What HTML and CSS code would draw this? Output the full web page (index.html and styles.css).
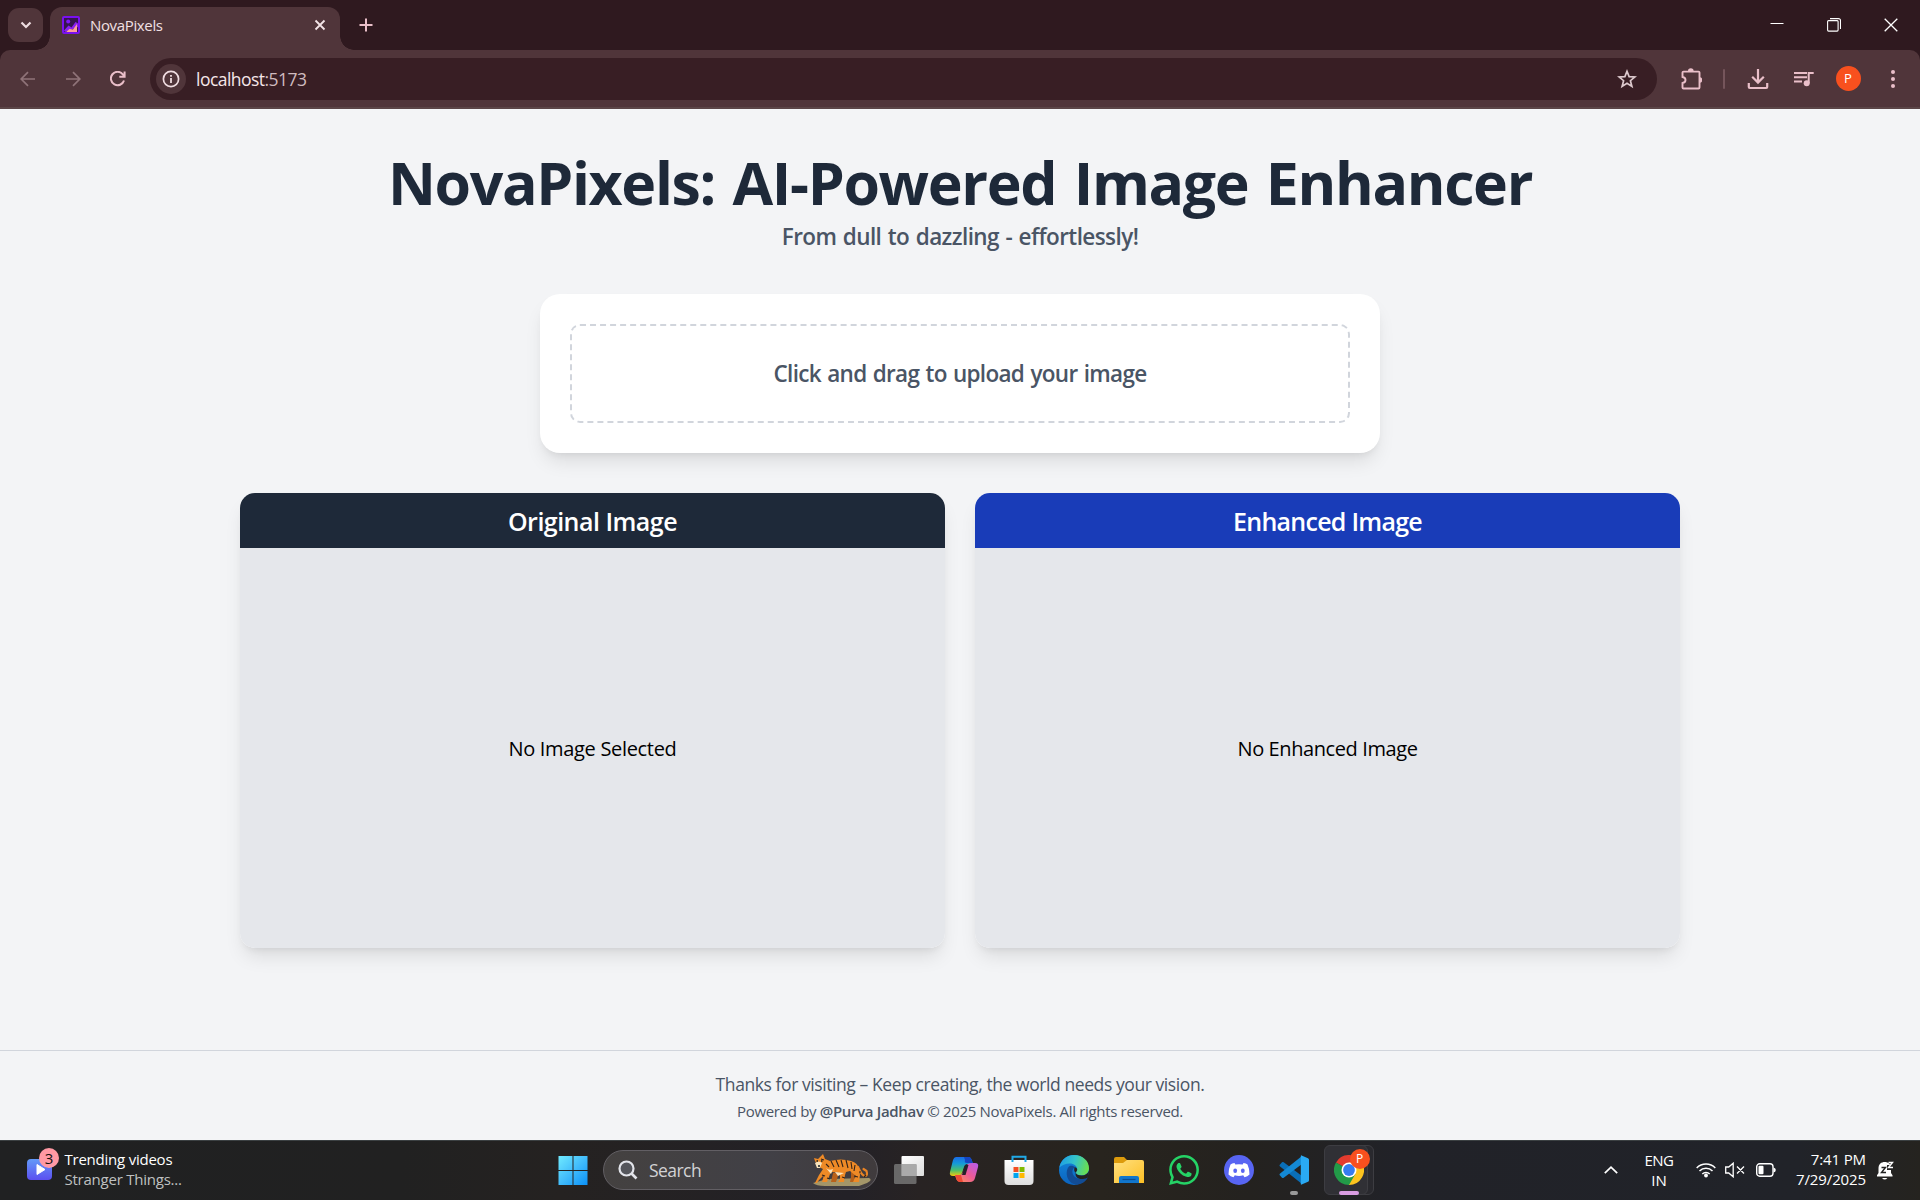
FILE: index.html
```html
<!DOCTYPE html>
<html lang="en">
<head>
<meta charset="utf-8">
<title>NovaPixels</title>
<link rel="stylesheet" href="styles.css">
</head>
<body>
<div class="screen">
  <header class="browser">
    <div class="tab-strip">
      <button class="tab-search" aria-label="Search tabs"><svg width="12" height="8" viewBox="0 0 12 8"><path d="M1.5 1.5 6 6l4.500-4.500" fill="none" stroke="#eedde0" stroke-width="2.200"/></svg></button>
      <div class="tab">
        <svg class="favicon" width="18" height="18" viewBox="0 0 18 18"><rect x="1" y="1" width="16" height="16" rx="1" fill="#35154f" stroke="#7a10f0" stroke-width="2"/><circle cx="6.200" cy="5.600" r="2" fill="#7f18f5"/><path d="M2 14.500 6.500 9.500l3 2L13.500 6 16 7.500V11L3 16z" fill="#8a20f0"/><path d="M4 16l3.500-3 3.500.5L15 8v8z" fill="#ff9c9c"/></svg>
        <span class="tab-title t-tab">NovaPixels</span>
        <svg class="tab-close" width="12" height="12" viewBox="0 0 12 12"><path d="M1.500 1.500l9 9m0-9l-9 9" stroke="#f3e4e7" stroke-width="1.800"/></svg>
      </div>
      <svg class="new-tab" width="14" height="14" viewBox="0 0 14 14"><path d="M7 .5v13M.5 7h13" stroke="#eabfc9" stroke-width="2"/></svg>
      <div class="window-controls">
        <svg width="14" height="14" viewBox="0 0 14 14"><path d="M.5 5.500h13" stroke="#fff" stroke-width="1"/></svg>
        <svg width="14" height="14" viewBox="0 0 14 14"><rect x=".6" y="2.600" width="10.500" height="10.500" rx="1" fill="none" stroke="#fff" stroke-width="1.100"/><path d="M3 .6h8.500a2 2 0 0 1 2 2V11" fill="none" stroke="#fff" stroke-width="1.100"/></svg>
        <svg width="14" height="14" viewBox="0 0 14 14"><path d="M.7.700l12.600 12.600m0-12.600L.7 13.300" stroke="#fff" stroke-width="1.300"/></svg>
      </div>
    </div>
    <div class="toolbar">
      <div class="nav-icons">
        <svg width="16" height="16" viewBox="0 0 16 16"><path d="M15 8H1.500M8 1.200 1.200 8 8 14.800" fill="none" stroke="#8f7378" stroke-width="1.700"/></svg>
        <svg width="16" height="16" viewBox="0 0 16 16"><path d="M1 8h13.500M8 1.200 14.800 8 8 14.800" fill="none" stroke="#8f7378" stroke-width="1.700"/></svg>
        <svg width="16" height="16" viewBox="0 0 16 16"><path d="M14 9.500A6.700 6.700 0 1 1 12.800 3.300L14.500 5.400M14.600.6v5.200H9.300" fill="none" stroke="#eabfc9" stroke-width="2"/></svg>
      </div>
      <div class="omnibox">
        <span class="site-info"><svg width="18" height="18" viewBox="0 0 18 18"><circle cx="9" cy="9" r="7.600" fill="none" stroke="#f0dde1" stroke-width="1.700"/><path d="M9 8v5M9 5v1.800" stroke="#f0dde1" stroke-width="1.800"/></svg></span>
        <span class="url t-url">localhost<span class="port">:5173</span></span>
        <svg class="star" width="20" height="20" viewBox="0 0 20 20"><path d="m10 2.300 2.100 5.300 5.800.4-4.500 3.700 1.500 5.700-4.900-3.100-4.900 3.100 1.500-5.700L2.100 8l5.800-.4z" fill="none" stroke="#dcc9cd" stroke-width="1.700"/></svg>
      </div>
      <div class="actions">
        <svg class="ext" width="22" height="22" viewBox="0 0 22 22"><path d="M2.500 4.500q0-.900 1-.900h15q1 0 1 1v14.900q0 1-1 1h-15q-1 0-1-1V15q3-.5 3-3t-3-3z" fill="none" stroke="#eabfc9" stroke-width="1.900"/><path d="M8 3a2.800 2.800 0 0 1 5.600 0zM19.500 9.200a2.800 2.800 0 0 1 0 5.600z" fill="#eabfc9"/></svg>
        <span class="divider"></span>
        <svg class="dl" width="22" height="22" viewBox="0 0 22 22"><path d="M11 1v13M5.200 8.800 11 14.600l5.800-5.800M1.800 15v4q0 1 1 1h16.400q1 0 1-1v-4" fill="none" stroke="#eabfc9" stroke-width="2.200"/></svg>
        <svg class="music" width="20" height="18" viewBox="0 0 20 18"><path d="M0 3h13M0 7.200h13M0 11.400h8M14.700 13V3h5" fill="none" stroke="#eabfc9" stroke-width="2"/><circle cx="12.700" cy="13.200" r="3" fill="#eabfc9"/></svg>
        <span class="avatar">P</span>
        <svg class="dots" width="4" height="20" viewBox="0 0 4 20"><circle cx="2" cy="3" r="2" fill="#eabfc9"/><circle cx="2" cy="10" r="2" fill="#eabfc9"/><circle cx="2" cy="17" r="2" fill="#eabfc9"/></svg>
      </div>
    </div>
  </header>

  <div class="page">
    <div class="hero">
      <h1 class="t-title">NovaPixels: AI-Powered Image Enhancer</h1>
      <p class="t-sub">From dull to dazzling - effortlessly!</p>
    </div>
    <div class="upload"><label class="dropzone"><span class="t-drop">Click and drag to upload your image</span></label></div>
    <div class="panels">
      <section class="panel"><h2 class="panel-dark"><span class="t-orig">Original Image</span></h2><div class="panel-body"><span class="t-nosel">No Image Selected</span></div></section>
      <section class="panel"><h2 class="panel-blue"><span class="t-enh">Enhanced Image</span></h2><div class="panel-body"><span class="t-noenh">No Enhanced Image</span></div></section>
    </div>
    <footer class="footer">
      <p class="thanks"><span class="t-thanks">Thanks for visiting – Keep creating, the world needs your vision.</span></p>
      <p class="powered"><span class="t-pow">Powered by <strong>@Purva Jadhav</strong> © 2025 NovaPixels. All rights reserved.</span></p>
    </footer>
  </div>

  <div class="taskbar">
    <div class="widgets">
      <div class="widget-icon"><svg width="25" height="21" viewBox="0 0 25 21"><defs><linearGradient id="wg" x2="0" y2="1"><stop stop-color="#639af8"/><stop offset="1" stop-color="#5b4ff0"/></linearGradient></defs><rect width="25" height="21" rx="4" fill="url(#wg)"/><path d="M10 5.500v10l8-5z" fill="#fff" stroke="#fff" stroke-linejoin="round"/></svg><span class="badge">3</span></div>
      <div class="widget-text"><span class="t-trend">Trending videos</span><span class="muted t-str">Stranger Things...</span></div>
    </div>
    <div class="apps">
      <div class="app"><svg width="30" height="30" viewBox="0 0 30 30"><defs><linearGradient id="win" gradientUnits="userSpaceOnUse" x1="0" y1="0" x2="30" y2="30"><stop stop-color="#72edff"/><stop offset=".5" stop-color="#43bdfb"/><stop offset="1" stop-color="#0a90f8"/></linearGradient></defs><path d="M.5 1h14v14H.5zM15.500 1h14v14h-14zM.5 16h14v14H.5zM15.500 16h14v14h-14z" fill="url(#win)"/></svg></div>
      <div class="search">
        <svg width="20" height="20" viewBox="0 0 20 20"><circle cx="8.500" cy="8.500" r="7" fill="#55565c" stroke="#e3e4ea" stroke-width="2.200"/><path d="m13.500 13.500 5 5" stroke="#e3e4ea" stroke-width="2.600"/></svg>
        <span class="t-search">Search</span>
        <svg class="tiger" width="58" height="34" viewBox="0 0 58 34">
          <path d="M0 30 14 26l42-1q4 2-2 5l-8 3H12Q3 33 0 30z" fill="#a49669"/>
          <path d="M45 14q4 9 7 9t1.500-5l-3-2" fill="none" stroke="#e88324" stroke-width="2.200" stroke-linecap="round"/>
          <path d="M20 20h6l-3 9h-5zM38 18l4 3-1 8h-4l1-5z" fill="#b8611a"/>
          <path d="M1 5 5 6l5-5 2 5 5 2q11-3 21 0 7 2 8 8l1 6-1 7h-6l1-2 2-4-6-5-4 1-1 3-1 7h-6l2-3v-6l-8-1-2 2-3 8h-5l2-7-5 5-2 3H2l4-8 4-6-4-2-4-6z" fill="#ee8a26"/>
          <path d="M2 10q4-3 7 0l-2 5H4zM13 15q3 3 7 1l-2 5zM22 19l9 1-6 3z" fill="#f8e3bd"/>
          <path d="M18 8l3 6M23 7l3 7M28 7l2 7M33 7l2 8M38 9l1 7M42 12l-1 6M13 11l3 3M9 22l3 1M29 24l3 1M41 23l4 1M14 25l3 1M8 6l3 1M51 24l2-2M46 19l2 0" stroke="#332319" stroke-width="1.100"/>
          <path d="M3.500 8h1.500M8 8h1.500M5 13h2" stroke="#182226" stroke-width="1.500"/>
        </svg>
      </div>
      <div class="app"><svg width="30" height="30" viewBox="0 0 30 30"><defs><linearGradient id="tv" x2="1" y2="1"><stop stop-color="#fff"/><stop offset="1" stop-color="#ddd"/></linearGradient></defs><rect x="7.500" y="1" width="22.500" height="20" rx="1" fill="url(#tv)"/><rect y="9" width="22.500" height="20" rx="1.500" fill="#777" fill-opacity=".82"/><path d="M7.500 9h15v12h-15z" fill="#aaa"/></svg></div>
      <div class="app"><svg width="30" height="30" viewBox="0 0 30 30"><defs><linearGradient id="ca" x2="0" y2="1"><stop stop-color="#1a6be8"/><stop offset=".35" stop-color="#159bd8"/><stop offset=".7" stop-color="#4cc06a"/><stop offset="1" stop-color="#f2c80c"/></linearGradient><linearGradient id="cb" x1="1" x2="0" y2="1"><stop stop-color="#b45cf2"/><stop offset=".5" stop-color="#ec5a96"/><stop offset="1" stop-color="#ff9950"/></linearGradient></defs><path d="M7 2h12q3 0 4 4l1 3h-6q-2 0-3 3l-2 6q-1 3-4 3H4q-4 0-3-4L4 5q1-3 3-3z" fill="url(#ca)"/><path d="M15 2h5q2 0 3 4l1 2h-6q-3 0-2-3z" fill="#1445c2"/><path d="M23 8h3q4 0 3 4l-3 11q-1 4-5 4h-9q-4 0-5-4l-1-3h4q3 0 4-3l3-6q2-3 6-3z" fill="url(#cb)"/><path d="M6 20h6l2 7h-3q-3 0-4-4z" fill="#ee4a36"/><path d="m13 20 3-10h3.500l-3 10z" fill="#27202a"/></svg></div>
      <div class="app"><svg width="30" height="30" viewBox="0 0 30 30"><defs><linearGradient id="st" x2="0" y2="1"><stop stop-color="#fff"/><stop offset="1" stop-color="#dedede"/></linearGradient></defs><path d="M.5 5h29v21q0 4-4 4h-21q-4 0-4-4z" fill="url(#st)"/><path d="M8.500 7V1.800h13V7" fill="none" stroke="#20a9e6" stroke-width="2"/><path d="M9.500 12h5v5h-5z" fill="#f25022"/><path d="M15.500 12h5v5h-5z" fill="#7fba00"/><path d="M9.500 18h5v5h-5z" fill="#00a4ef"/><path d="M15.500 18h5v5h-5z" fill="#ffb900"/></svg></div>
      <div class="app"><svg width="30" height="30" viewBox="0 0 24 24"><defs><linearGradient id="ea" y1=".3" x2="1" y2=".5"><stop stop-color="#1d9de6"/><stop offset=".5" stop-color="#35c4c9"/><stop offset="1" stop-color="#6be04c"/></linearGradient><linearGradient id="eb" x2="0" y2="1"><stop stop-color="#1488dc"/><stop offset="1" stop-color="#0b63be"/></linearGradient></defs><circle cx="12" cy="12" r="12" fill="url(#eb)"/><path d="M.3 10C1.500 4 6 0 12 0c7 0 12 4.800 12 10.500 0 3.500-2.700 5.700-6 5.700-3 0-4.600-1-4.600-2.200 0-.9 1.100-1.200 1.100-3 0-2.200-2.500-4.300-6-4.300-3.300 0-6.500 1.300-8.200 3.300z" fill="url(#ea)"/><path d="M8.500 8.700c-4 3-3.300 14 6 15 4.500-.8 7-3 8.200-5.200.3-.7-.2-.9-.8-.600-6.300 3.200-11.200-.5-11.200-4.500 0-2 1-3.300 2.300-3.700-1-.9-2.800-1.500-4.500-1z" fill="#124c95"/><path d="M13.600 14.200c-1.300-.5-2-2.300-1-4.600 1 .4 2 1 2 2.200 0 1-1 1.400-1 2.400z M13.400 14.200c.2 1.200 2 2.100 4.600 2.100 3 0 5-1.500 6-3.800-.1 2.500-.6 4.500-1.400 5.600-6 2.900-10.300-.3-9.200-3.900z" fill="#25221f"/></svg></div>
      <div class="app"><svg width="30" height="30" viewBox="0 0 30 30"><defs><linearGradient id="fo" x2="1" y2="1"><stop stop-color="#ffe080"/><stop offset="1" stop-color="#fcbf24"/></linearGradient></defs><path d="M0 4q0-2 2-2h8l3 3h13v5H0z" fill="#dd9b0c"/><path d="M0 8h9l4-3h15q2 0 2 2v21H0z" fill="url(#fo)"/><path d="M5 28v-5q0-2 2-2h16q2 0 2 2v5z" fill="#1176cc"/><path d="M8.500 24.500h13" stroke="#0b4c91" stroke-width="1.200"/></svg></div>
      <div class="app"><svg width="30" height="30" viewBox="0 0 24 24"><path fill="#25d366" d="M17.472 14.382c-.297-.149-1.758-.867-2.030-.967-.273-.099-.471-.148-.670.150-.197.297-.767.966-.940 1.164-.173.199-.347.223-.644.075-.297-.150-1.255-.463-2.390-1.475-.883-.788-1.480-1.761-1.653-2.059-.173-.297-.018-.458.130-.606.134-.133.298-.347.446-.520.149-.174.198-.298.298-.497.099-.198.050-.371-.025-.520-.075-.149-.669-1.612-.916-2.207-.242-.579-.487-.500-.669-.510-.173-.008-.371-.010-.570-.010-.198 0-.520.074-.792.372-.272.297-1.040 1.016-1.040 2.479 0 1.462 1.065 2.875 1.213 3.074.149.198 2.096 3.200 5.077 4.487.709.306 1.262.489 1.694.625.712.227 1.360.195 1.871.118.571-.085 1.758-.719 2.006-1.413.248-.694.248-1.289.173-1.413-.074-.124-.272-.198-.570-.347m-5.421 7.403h-.004a9.870 9.870 0 0 1-5.031-1.378l-.361-.214-3.741.982.998-3.648-.235-.374a9.860 9.860 0 0 1-1.510-5.260c.001-5.450 4.436-9.884 9.888-9.884 2.640 0 5.122 1.030 6.988 2.898a9.825 9.825 0 0 1 2.893 6.994c-.003 5.450-4.437 9.884-9.885 9.884m8.413-18.297A11.815 11.815 0 0 0 12.050 0C5.495 0 .160 5.335.157 11.892c0 2.096.547 4.142 1.588 5.945L.057 24l6.305-1.654a11.882 11.882 0 0 0 5.683 1.448h.005c6.554 0 11.890-5.335 11.893-11.893a11.821 11.821 0 0 0-3.480-8.413z"/></svg></div>
      <div class="app"><svg width="30" height="30" viewBox="0 0 30 30"><circle cx="15" cy="15" r="15" fill="#5865f2"/><path d="M10.500 8q-2.500.4-4 1.500-2 4-2 10 2 2 5 2.800l1.300-2q4.200 1.200 8.400 0l1.300 2q3-.8 5-2.800 0-6-2-10-1.500-1.100-4-1.500l-.8 1.500q-3.700-.6-7.400 0z" fill="#fff"/><ellipse cx="11.200" cy="15.700" rx="1.900" ry="2.200" fill="#5865f2"/><ellipse cx="18.800" cy="15.700" rx="1.900" ry="2.200" fill="#5865f2"/></svg></div>
      <div class="app running"><svg width="30" height="30" viewBox="0 0 30 30"><path d="M1 9.500 3 7.300q.8-.6 1.700 0L23 21v8L.8 11.200q-.8-.9.200-1.700z" fill="#0a6fb8"/><path d="M1 20.500 3 22.700q.8.600 1.700 0L23 9V1L.8 18.800q-.8.900.2 1.700z" fill="#1489d4"/><path d="M22 .2 29 3.300q1 .5 1 1.500v20.400q0 1-1 1.500L22 29.800q-.3-.6-.2-1.800V2q0-1.200.2-1.800z" fill="#2aaaf3"/></svg></div>
      <div class="app chrome-app"><span class="app-back"></span><span class="app-front"></span><svg width="30" height="30" viewBox="0 0 30 30"><path d="M15 15 2 7.500A15 15 0 0 1 28 7.500z" fill="#e33b2e"/><path d="M15 15V7.500h13A15 15 0 0 1 15 30z" fill="#fcc31e"/><path d="M15 15l6.500 3.700L15 30A15 15 0 0 1 2 7.500z" fill="#229a48"/><circle cx="15" cy="15" r="7.500" fill="#fff"/><circle cx="15" cy="15" r="5.900" fill="#357cf0"/></svg><span class="profile">P</span></div>
    </div>
    <div class="tray">
      <svg class="chev" width="14" height="8" viewBox="0 0 14 8"><path d="m.8 7.200 6.200-6 6.200 6" fill="none" stroke="#fff" stroke-width="1.700"/></svg>
      <div class="lang"><span class="t-eng">ENG</span><span class="t-in">IN</span></div>
      <svg class="wifi" width="20" height="16" viewBox="0 0 20 16"><path d="M.7 6a13 13 0 0 1 18.600 0M3.500 9a9.200 9.200 0 0 1 13 0M6.300 12a5.300 5.300 0 0 1 7.400 0" fill="none" stroke="#fff" stroke-width="1.500"/><circle cx="10" cy="13.500" r="1.900" fill="#fff"/></svg>
      <svg class="vol" width="20" height="16" viewBox="0 0 20 16"><path d="M.7 5h3l4.500-3.800v13.600L3.700 11h-3zM12 4.500l7 7m0-7-7 7" fill="none" stroke="#fff" stroke-width="1.300"/></svg>
      <svg class="bat" width="20" height="14" viewBox="0 0 20 14"><rect x=".7" y=".8" width="16.300" height="12.400" rx="3" fill="none" stroke="#fff" stroke-width="1.400"/><rect x="2.500" y="2.700" width="5" height="8.600" rx="1" fill="#fff"/><path d="M17.500 4.500q2.300.5 2.300 2.500t-2.300 2.500z" fill="#fff"/></svg>
      <div class="clock"><span class="t-time">7:41 PM</span><span class="t-date">7/29/2025</span></div>
      <svg class="bell" width="18" height="20" viewBox="0 0 18 20"><path d="M1 15.500h15.500v-1.300L15 12V7.500C15 3 12 1 8.700 1S2.500 3 2.500 7.500V12L1 14.200z" fill="#fff"/><path d="M6 17q2.700 3 5.400 0z" fill="#fff"/><path d="M5.500 6.500h4l-4 5h4.500" fill="none" stroke="#222" stroke-width="1.400"/><path d="M11 4h5.800v5H11z" fill="#222"/><path d="M12.500 1.500h4l-4 5h4.500" fill="none" stroke="#fff" stroke-width="1.400"/></svg>
    </div>
  </div>
</div>
</body>
</html>
```
FILE: styles.css
```css
* { box-sizing: border-box; }
body { margin: 0; font-family: "Open Sans", "Noto Sans", sans-serif; }
h1, h2, p { margin: 0; }
svg { display: block; flex: none; }
.screen { width: 1920px; height: 1200px; display: flex; flex-direction: column; overflow: hidden; }

/* Browser chrome */
.browser { height: 109px; flex: none; background: #2f191f; }
.tab-strip { height: 50px; display: flex; align-items: flex-start; padding-left: 8px; }
.tab-search { width: 35px; height: 34px; margin-top: 8px; border: 0; padding: 0; border-radius: 11px; background: #50353a; display: flex; align-items: center; justify-content: center; }
.tab { position: relative; width: 290px; height: 43px; margin: 7px 0 0 7px; padding: 0 14px 0 12px; border-radius: 12px 12px 0 0; background: #50353a; display: flex; align-items: center; }
.tab::before, .tab::after { content: ""; position: absolute; bottom: 0; width: 14px; height: 14px; }
.tab::before { left: -14px; background: radial-gradient(circle at 0 0, transparent 13.5px, #50353a 14px); }
.tab::after { right: -14px; background: radial-gradient(circle at 100% 0, transparent 13.5px, #50353a 14px); }
.favicon { margin-top: -7px; }
.tab-title { margin: -8px 0 0 10px; font-size: 15px; color: #f1e0e3; white-space: nowrap; }
.tab-close { margin: -7px 0 0 auto; }
.new-tab { margin: 18px 0 0 19px; }
.window-controls { margin: 18px 22px 0 auto; display: flex; gap: 43px; }
.toolbar { height: 59px; background: #50353a; border-bottom: 2px solid #5b4547; border-radius: 10px 10px 0 0; display: flex; align-items: center; }
.nav-icons { width: 150px; flex: none; display: flex; gap: 29px; padding-left: 20px; }
.omnibox { width: 1507px; height: 42px; flex: none; border-radius: 21px; background: #381e24; display: flex; align-items: center; padding: 0 20px 0 6px; }
.site-info { width: 30px; height: 30px; border-radius: 50%; background: #50353a; display: flex; align-items: center; justify-content: center; }
.url { margin-left: 10px; font-size: 17.5px; color: #f5e6e9; white-space: nowrap; }
.port { color: #cfbbbf; }
.star { margin-left: auto; }
.actions { flex: 1; display: flex; align-items: center; padding-left: 23px; }
.divider { width: 2px; height: 20px; margin-left: 21px; background: #75555b; border-radius: 1px; }
.dl { margin-left: 21.5px; }
.music { margin-left: 25px; }
.avatar { width: 25px; height: 25px; margin-left: 22px; border-radius: 50%; background: #f8501e; color: #fff; font-size: 13px; line-height: 25px; text-align: center; }
.dots { margin-left: 30px; }

/* Page */
.page { height: 1031px; flex: none; background: #f3f4f6; }
.hero { height: 185px; padding-top: 43px; text-align: center; }
.hero h1 { font-size: 59px; line-height: 60px; font-weight: 700; color: #1e2939; white-space: nowrap; }
.hero p { margin-top: 7px; font-size: 22.5px; line-height: 35px; font-weight: 600; color: #4a5565; }
.upload { width: 840px; height: 159px; margin: 0 auto; padding: 30px; border-radius: 20px; background: #fff; box-shadow: 0 12px 19px -4px rgba(0,0,0,.1), 0 5px 8px -5px rgba(0,0,0,.1); }
.dropzone { height: 99px; border: 2px dashed #d1d5dc; border-radius: 10px; display: flex; align-items: center; justify-content: center; font-size: 22.5px; font-weight: 600; color: #4a5565; }
.panels { width: 1440px; margin: 40px auto 0; display: grid; grid-template-columns: 1fr 1fr; gap: 30px; }
.panel { height: 455px; border-radius: 15px; overflow: hidden; background: #fff; box-shadow: 0 12px 19px -4px rgba(0,0,0,.1), 0 5px 8px -5px rgba(0,0,0,.1); }
.panel h2 { height: 55px; padding-top: 1px; display: flex; align-items: center; justify-content: center; font-size: 25px; font-weight: 600; color: #fff; }
.panel .panel-dark { background: #1e2939; }
.panel .panel-blue { background: #193cb8; }
.panel-body { height: 400px; background: #e5e7eb; display: flex; align-items: center; justify-content: center; font-size: 20px; color: #000; }
.footer { margin-top: 102px; border-top: 1px solid #d1d5dc; padding-top: 21px; text-align: center; color: #4a5565; }
.thanks { font-size: 17.5px; line-height: 25px; }
.powered { margin-top: 4px; font-size: 15px; line-height: 20px; }
.powered strong { font-weight: 600; }

/* Taskbar */
.taskbar { height: 60px; flex: none; display: flex; border-top: 1px solid #3b4042; color: #fff; font-size: 15px; line-height: 20px; background: linear-gradient(90deg, #202122 0, #212121 400px, #252221 560px, #232127 850px, #282323 920px, #28241e 1100px, #24221f 1250px, #212228 1400px, #212329 1800px, #25231f 1920px); }
.widgets { width: 545px; flex: none; display: flex; padding: 8px 0 0 27px; }
.widget-icon { position: relative; width: 37.5px; padding-top: 10px; }
.badge { position: absolute; left: 12px; top: -1px; width: 20px; height: 20px; border-radius: 50%; background: #ff99a4; color: #111; text-align: center; }
.widget-text, .lang, .clock { display: flex; flex-direction: column; white-space: nowrap; }
.muted { color: #bfc0c0; }
.apps { display: flex; align-items: center; height: 58px; }
.app { position: relative; width: 55px; height: 58px; display: flex; align-items: center; justify-content: center; }
.search { width: 275px; height: 40px; margin: 0 3.5px 0 3px; border: 1px solid #625f64; border-radius: 20px; background: linear-gradient(90deg, #444140, #414046 60%, #403b3d); display: flex; align-items: center; padding: 0 6px 0 14px; color: #d2d2d4; font-size: 17.5px; }
.search span { margin-left: 11px; }
.tiger { margin-left: auto; }
.running::after, .chrome-app::after { content: ""; position: absolute; bottom: 4px; width: 8px; height: 4px; border-radius: 2px; background: #999; }
.chrome-app::after { width: 20px; background: #d99ce2; }
.app-back, .app-front { position: absolute; top: 4px; height: 50px; border: 1px solid #3d3d42; border-radius: 6px; background: #303035; }
.app-back { left: 12px; width: 40px; background: #29292e; }
.app-front { left: 2px; width: 44px; }
.chrome-app svg { position: relative; }
.profile { position: absolute; left: 28px; top: 8px; width: 20px; height: 20px; border-radius: 50%; background: #f8501e; font-size: 12px; text-align: center; }
.tray { margin-left: auto; display: flex; align-items: flex-start; }
.chev { margin-top: 25px; }
.lang { width: 40px; margin: 9px 0 0 21px; align-items: center; }
.wifi { margin: 21px 0 0 17px; }
.vol { margin: 21px 0 0 9px; }
.bat { margin: 22px 0 0 11px; }
.clock { width: 78px; margin: 8px 0 0 12px; align-items: flex-end; }
.bell { margin: 20px 26px 0 10px; }

/* Tracking per text run */
.t-tab { letter-spacing: -.35px; }
.t-url { letter-spacing: -.53px; }
.t-title { letter-spacing: -1.34px; word-spacing: 3.5px; }
.t-sub { letter-spacing: -.58px; word-spacing: 1.2px; }
.t-drop { letter-spacing: -.69px; word-spacing: 1.1px; }
.t-orig { letter-spacing: -.52px; }
.t-enh { letter-spacing: -.74px; }
.t-nosel { letter-spacing: -.32px; }
.t-noenh { letter-spacing: -.4px; }
.t-thanks { letter-spacing: -.42px; }
.t-pow { letter-spacing: -.325px; }
.t-trend, .t-str { letter-spacing: -.23px; }
.t-search { letter-spacing: -.55px; }
.t-eng { letter-spacing: -.5px; }
.t-time, .t-date { letter-spacing: -.12px; }
```
